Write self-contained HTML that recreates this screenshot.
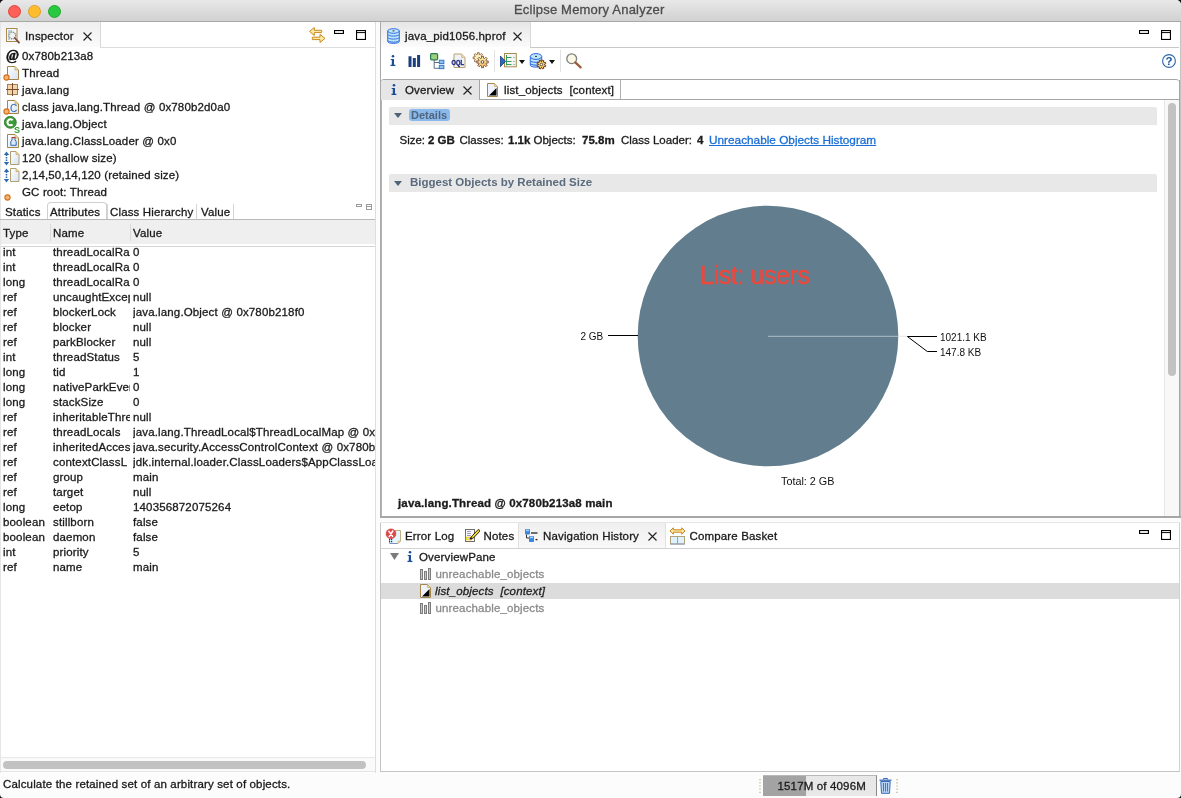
<!DOCTYPE html>
<html><head><meta charset="utf-8">
<style>
html,body{margin:0;padding:0;}
body{width:1181px;height:798px;overflow:hidden;position:relative;background:#0d0d12;font-family:"Liberation Sans",sans-serif;font-size:12px;color:#1a1a1a;}
#win{will-change:transform;position:absolute;left:0;top:0;width:1181px;height:798px;background:#fcfcfc;border-radius:5px 5px 4px 4px;overflow:hidden;}
.a{position:absolute;}
.t{position:absolute;white-space:pre;line-height:15px;font-size:11.5px;letter-spacing:0.15px;-webkit-text-stroke:0.3px currentColor;margin-top:-1px;}
#title{left:0;top:0;width:1181px;height:21px;background:linear-gradient(#e8e8e8,#d1d1d1);border-bottom:1px solid #a8a8a8;}
.tl{position:absolute;top:5px;width:11px;height:11px;border-radius:50%;}
.pane{position:absolute;background:#fff;}
.hl{position:absolute;height:1px;}
.vl{position:absolute;width:1px;}
</style></head><body>
<div id="win">
<!-- title bar -->
<div id="title" class="a">
  <div class="tl" style="left:8px;background:#fe5f57;border:0.5px solid #e1453f;"></div>
  <div class="tl" style="left:28px;background:#febc2e;border:0.5px solid #dfa023;"></div>
  <div class="tl" style="left:48px;background:#28c840;border:0.5px solid #1daa2c;"></div>
  <div class="t" style="left:514px;top:3px;font-size:13px;color:#4d4d4d;letter-spacing:0.2px;">Eclipse Memory Analyzer</div>
</div>

<!-- LEFT PANE -->
<div class="pane" style="left:0;top:22px;width:375px;height:751px;"></div>
<div class="vl" style="left:375px;top:22px;height:751px;background:#dedede;"></div>
<div class="vl" style="left:0px;top:22px;height:751px;background:#e6e6e6;"></div>
<!-- inspector tab -->
<div class="a" style="left:1px;top:22px;width:99px;height:25px;background:linear-gradient(#efefef,#fbfbfb);"></div>
<div class="vl" style="left:100px;top:22px;height:26px;background:#d8d8d8;"></div>
<div class="hl" style="left:100px;top:47px;width:275px;background:#dcdcdc;"></div>
<div class="t" style="left:25px;top:30px;">Inspector</div>
<svg width="0" height="0" style="position:absolute">
<defs>
<linearGradient id="docg" x1="0" y1="0" x2="1" y2="1"><stop offset="0" stop-color="#ffffff"/><stop offset="1" stop-color="#d6e2f2"/></linearGradient>
<symbol id="doc" viewBox="0 0 12 14"><path d="M0.5 0.5H8L11.5 4V13.5H0.5Z" fill="url(#docg)" stroke="#a5854a" stroke-width="1"/><path d="M8 0.5V4H11.5" fill="#e8d39a" stroke="#c9ad6c" stroke-width="0.8"/></symbol>
<symbol id="info" viewBox="0 0 6 11"><circle cx="3" cy="1.3" r="1.3" fill="#1b4d9b"/><path d="M0.7 4H4V9.8H5.4V11H0.5V9.8H1.8V5.1H0.7Z" fill="#1b4d9b"/></symbol>
<symbol id="odot" viewBox="0 0 7 7"><circle cx="3.5" cy="3.5" r="2.6" fill="#f6b46b" stroke="#d46f1e" stroke-width="1.1"/></symbol>
</defs></svg>
<!-- left tab icons -->
<svg class="a" style="left:6px;top:28px" width="15" height="16" viewBox="0 0 15 16"><rect x="0.5" y="0.5" width="10.5" height="13" fill="#f4f7fc" stroke="#a88a4c"/><path d="M2 3h4M2 5h2M2 7h1.5M2 9h1.5M2 11h2" stroke="#6b8bbd" stroke-width="0.8"/><circle cx="6.3" cy="7.5" r="3.4" fill="#eef1f4" stroke="#8a8a6a" stroke-width="1.2" stroke-dasharray="1.2 0.6"/><path d="M8.8 10l4.2 4.6" stroke="#7a4a36" stroke-width="1.8" stroke-linecap="round"/></svg>
<svg class="a" style="left:83px;top:32px" width="9" height="9" viewBox="0 0 9 9"><path d="M0.5 0.5L8.5 8.5M8.5 0.5L0.5 8.5" stroke="#222" stroke-width="1.1"/></svg>
<svg class="a" style="left:309px;top:27px" width="17" height="16" viewBox="0 0 17 16"><path d="M0.5 4.4L5.3 0.5V3.3H12.7V5.6H5.3V8.5Z" fill="#fbe9a8" stroke="#c98a1e" stroke-width="1" stroke-linejoin="round"/><path d="M16 11.4L11 7.3V10.2H3.3V12.6H11V15.5Z" fill="#fbe9a8" stroke="#c98a1e" stroke-width="1" stroke-linejoin="round"/></svg>
<svg class="a" style="left:334px;top:30px" width="10" height="4"><rect x="0.55" y="0.55" width="8.9" height="2.9" fill="#fff" stroke="#000" stroke-width="1.1"/></svg>
<svg class="a" style="left:356px;top:30px" width="10" height="10"><rect x="0.55" y="0.55" width="8.9" height="8.9" fill="#fff" stroke="#000" stroke-width="1.1"/><path d="M0 2.6H10" stroke="#000" stroke-width="1"/></svg>

<!-- inspector items -->
<div class="a" style="left:6px;top:46.5px;font-family:'Liberation Serif';font-weight:bold;font-size:14px;line-height:17px;-webkit-text-stroke:0.5px #000;">@</div>
<div class="t" style="left:22px;top:49.5px;">0x780b213a8</div>
<svg class="a" style="left:7px;top:66px" width="12" height="14"><use href="#doc"/></svg>
<svg class="a" style="left:3px;top:74px" width="7" height="7"><use href="#odot"/></svg>
<div class="t" style="left:22px;top:66.5px;">Thread</div>
<svg class="a" style="left:6px;top:83px" width="13" height="13" viewBox="0 0 13 13"><rect x="1.5" y="1.5" width="10" height="10" fill="#f3d7a8" stroke="#b07a50" stroke-width="1"/><path d="M6.5 0V13M0 6.5H13" stroke="#7a4a30" stroke-width="1"/></svg>
<div class="t" style="left:22px;top:83.5px;">java.lang</div>
<svg class="a" style="left:7px;top:100px" width="12" height="14"><use href="#doc"/></svg>
<div class="a" style="left:10px;top:103px;font-size:10px;line-height:11px;color:#2a62b0;">C</div>
<svg class="a" style="left:3px;top:108px" width="7" height="7"><use href="#odot"/></svg>
<div class="t" style="left:22px;top:100.5px;">class java.lang.Thread @ 0x780b2d0a0</div>
<svg class="a" style="left:4px;top:116px" width="16" height="17" viewBox="0 0 16 17"><circle cx="6.3" cy="6.3" r="6" fill="#3e9a3a" stroke="#2b7a2b" stroke-width="0.8"/><path d="M8.6 4.2A3 3 0 1 0 8.6 8.4" fill="none" stroke="#fff" stroke-width="2"/><text x="10" y="16.6" font-family="Liberation Sans" font-weight="bold" font-size="9" fill="#2f9a2f">S</text></svg>
<div class="t" style="left:22px;top:117.5px;">java.lang.Object</div>
<svg class="a" style="left:7px;top:134px" width="12" height="14"><use href="#doc"/></svg>
<svg class="a" style="left:10px;top:137px" width="7" height="9" viewBox="0 0 7 9"><rect x="1.5" y="0" width="4" height="1.6" fill="#a33a2a"/><path d="M2 1.6V3L0.8 4.6V8.3H6.2V4.6L5 3V1.6" fill="#dbe9f8" stroke="#2f69b5" stroke-width="1"/></svg>
<div class="t" style="left:22px;top:134.5px;">java.lang.ClassLoader @ 0x0</div>
<svg class="a" style="left:3px;top:151px" width="17" height="15" viewBox="0 0 17 15"><path d="M3.5 3.5V12" stroke="#2c6bb5" stroke-width="1.6" stroke-dasharray="1.5 1"/><path d="M0.8 4L3.5 0.6L6.2 4ZM0.8 11L3.5 14.4L6.2 11Z" fill="#2c6bb5"/><path d="M7.5 0.5H13L16 3.5V13.5H7.5Z" fill="url(#docg)" stroke="#b0a070" stroke-width="1"/><path d="M13 0.5V3.5H16" fill="#e8d39a" stroke="#c9ad6c" stroke-width="0.8"/></svg>
<div class="t" style="left:22px;top:151.5px;">120 (shallow size)</div>
<svg class="a" style="left:3px;top:168px" width="17" height="15" viewBox="0 0 17 15"><path d="M3.5 3.5V12" stroke="#2c6bb5" stroke-width="1.6" stroke-dasharray="1.5 1"/><path d="M0.8 4L3.5 0.6L6.2 4ZM0.8 11L3.5 14.4L6.2 11Z" fill="#2c6bb5"/><path d="M7.5 0.5H13L16 3.5V13.5H7.5Z" fill="url(#docg)" stroke="#b0a070" stroke-width="1"/><path d="M13 0.5V3.5H16" fill="#e8d39a" stroke="#c9ad6c" stroke-width="0.8"/></svg>
<div class="t" style="left:22px;top:168.5px;">2,14,50,14,120 (retained size)</div>
<svg class="a" style="left:3.5px;top:193.5px" width="7" height="7"><use href="#odot"/></svg>
<div class="t" style="left:22px;top:185.5px;">GC root: Thread</div>

<!-- attribute tabs -->
<div class="a" style="left:47px;top:202px;width:58px;height:18px;border:1px solid #cfcfcf;border-bottom:none;border-radius:4px 4px 0 0;background:#fff;"></div>
<div class="hl" style="left:0;top:219px;width:375px;background:#b9b9b9;"></div>
<div class="vl" style="left:107px;top:204px;height:15px;background:#d4d4d4;"></div>
<div class="vl" style="left:196px;top:204px;height:15px;background:#d4d4d4;"></div>
<div class="vl" style="left:233px;top:204px;height:15px;background:#d4d4d4;"></div>
<div class="t" style="left:5px;top:205.5px;">Statics</div>
<div class="t" style="left:50px;top:205.5px;">Attributes</div>
<div class="t" style="left:110px;top:205.5px;">Class Hierarchy</div>
<div class="t" style="left:201px;top:205.5px;">Value</div>
<div class="a" style="left:356px;top:204px;width:4px;height:1px;border:1px solid #9a9a9a;"></div>
<div class="a" style="left:366px;top:204px;width:4px;height:4px;border:1px solid #9a9a9a;"></div>
<div class="hl" style="left:366px;top:206px;width:6px;background:#9a9a9a;"></div>

<!-- table header -->
<div class="a" style="left:1px;top:220px;width:374px;height:24px;background:#efefef;"></div>
<div class="hl" style="left:1px;top:245.5px;width:374px;background:#d6d6d6;"></div>
<div class="vl" style="left:50px;top:224px;height:17px;background:#d9d9d9;"></div>
<div class="vl" style="left:130px;top:224px;height:17px;background:#d9d9d9;"></div>
<div class="t" style="left:3px;top:226.5px;">Type</div>
<div class="t" style="left:53px;top:226.5px;">Name</div>
<div class="t" style="left:133px;top:226.5px;">Value</div>
<div id="rows" class="a" style="left:0;top:245px;width:375px;height:510px;overflow:hidden;"></div>
<div class="t" style="left:3px;top:245.5px;">int</div><div class="t" style="left:53px;top:245.5px;width:77px;overflow:hidden;">threadLocalRa</div><div class="t" style="left:133px;top:245.5px;width:242px;overflow:hidden;">0</div>
<div class="t" style="left:3px;top:260.5px;">int</div><div class="t" style="left:53px;top:260.5px;width:77px;overflow:hidden;">threadLocalRa</div><div class="t" style="left:133px;top:260.5px;width:242px;overflow:hidden;">0</div>
<div class="t" style="left:3px;top:275.5px;">long</div><div class="t" style="left:53px;top:275.5px;width:77px;overflow:hidden;">threadLocalRa</div><div class="t" style="left:133px;top:275.5px;width:242px;overflow:hidden;">0</div>
<div class="t" style="left:3px;top:290.5px;">ref</div><div class="t" style="left:53px;top:290.5px;width:77px;overflow:hidden;">uncaughtExcep</div><div class="t" style="left:133px;top:290.5px;width:242px;overflow:hidden;">null</div>
<div class="t" style="left:3px;top:305.5px;">ref</div><div class="t" style="left:53px;top:305.5px;width:77px;overflow:hidden;">blockerLock</div><div class="t" style="left:133px;top:305.5px;width:242px;overflow:hidden;">java.lang.Object @ 0x780b218f0</div>
<div class="t" style="left:3px;top:320.5px;">ref</div><div class="t" style="left:53px;top:320.5px;width:77px;overflow:hidden;">blocker</div><div class="t" style="left:133px;top:320.5px;width:242px;overflow:hidden;">null</div>
<div class="t" style="left:3px;top:335.5px;">ref</div><div class="t" style="left:53px;top:335.5px;width:77px;overflow:hidden;">parkBlocker</div><div class="t" style="left:133px;top:335.5px;width:242px;overflow:hidden;">null</div>
<div class="t" style="left:3px;top:350.5px;">int</div><div class="t" style="left:53px;top:350.5px;width:77px;overflow:hidden;">threadStatus</div><div class="t" style="left:133px;top:350.5px;width:242px;overflow:hidden;">5</div>
<div class="t" style="left:3px;top:365.5px;">long</div><div class="t" style="left:53px;top:365.5px;width:77px;overflow:hidden;">tid</div><div class="t" style="left:133px;top:365.5px;width:242px;overflow:hidden;">1</div>
<div class="t" style="left:3px;top:380.5px;">long</div><div class="t" style="left:53px;top:380.5px;width:77px;overflow:hidden;">nativeParkEver</div><div class="t" style="left:133px;top:380.5px;width:242px;overflow:hidden;">0</div>
<div class="t" style="left:3px;top:395.5px;">long</div><div class="t" style="left:53px;top:395.5px;width:77px;overflow:hidden;">stackSize</div><div class="t" style="left:133px;top:395.5px;width:242px;overflow:hidden;">0</div>
<div class="t" style="left:3px;top:410.5px;">ref</div><div class="t" style="left:53px;top:410.5px;width:77px;overflow:hidden;">inheritableThre</div><div class="t" style="left:133px;top:410.5px;width:242px;overflow:hidden;">null</div>
<div class="t" style="left:3px;top:425.5px;">ref</div><div class="t" style="left:53px;top:425.5px;width:77px;overflow:hidden;">threadLocals</div><div class="t" style="left:133px;top:425.5px;width:242px;overflow:hidden;">java.lang.ThreadLocal$ThreadLocalMap @ 0x7</div>
<div class="t" style="left:3px;top:440.5px;">ref</div><div class="t" style="left:53px;top:440.5px;width:77px;overflow:hidden;">inheritedAcces</div><div class="t" style="left:133px;top:440.5px;width:242px;overflow:hidden;">java.security.AccessControlContext @ 0x780b</div>
<div class="t" style="left:3px;top:455.5px;">ref</div><div class="t" style="left:53px;top:455.5px;width:77px;overflow:hidden;">contextClassL</div><div class="t" style="left:133px;top:455.5px;width:242px;overflow:hidden;">jdk.internal.loader.ClassLoaders$AppClassLoa</div>
<div class="t" style="left:3px;top:470.5px;">ref</div><div class="t" style="left:53px;top:470.5px;width:77px;overflow:hidden;">group</div><div class="t" style="left:133px;top:470.5px;width:242px;overflow:hidden;">main</div>
<div class="t" style="left:3px;top:485.5px;">ref</div><div class="t" style="left:53px;top:485.5px;width:77px;overflow:hidden;">target</div><div class="t" style="left:133px;top:485.5px;width:242px;overflow:hidden;">null</div>
<div class="t" style="left:3px;top:500.5px;">long</div><div class="t" style="left:53px;top:500.5px;width:77px;overflow:hidden;">eetop</div><div class="t" style="left:133px;top:500.5px;width:242px;overflow:hidden;">140356872075264</div>
<div class="t" style="left:3px;top:515.5px;">boolean</div><div class="t" style="left:53px;top:515.5px;width:77px;overflow:hidden;">stillborn</div><div class="t" style="left:133px;top:515.5px;width:242px;overflow:hidden;">false</div>
<div class="t" style="left:3px;top:530.5px;">boolean</div><div class="t" style="left:53px;top:530.5px;width:77px;overflow:hidden;">daemon</div><div class="t" style="left:133px;top:530.5px;width:242px;overflow:hidden;">false</div>
<div class="t" style="left:3px;top:545.5px;">int</div><div class="t" style="left:53px;top:545.5px;width:77px;overflow:hidden;">priority</div><div class="t" style="left:133px;top:545.5px;width:242px;overflow:hidden;">5</div>
<div class="t" style="left:3px;top:560.5px;">ref</div><div class="t" style="left:53px;top:560.5px;width:77px;overflow:hidden;">name</div><div class="t" style="left:133px;top:560.5px;width:242px;overflow:hidden;">main</div>

<!-- h scrollbar -->
<div class="a" style="left:1px;top:757px;width:374px;height:15px;background:#fafafa;border-top:1px solid #e8e8e8;border-bottom:1px solid #e4e4e4;box-sizing:border-box;"></div>
<div class="a" style="left:3px;top:761px;width:363px;height:8px;border-radius:4px;background:#c2c2c2;"></div>


<!-- RIGHT TOP PANE -->
<div class="pane" style="left:381px;top:22px;width:798px;height:494px;"></div>
<div class="vl" style="left:380px;top:22px;height:495px;background:#a9a9a9;"></div>
<div class="vl" style="left:1180px;top:22px;height:496px;background:#c4c4c4;"></div><div class="vl" style="left:1179px;top:80px;height:437px;background:#a6a6a6;"></div><div class="vl" style="left:381px;top:80px;height:437px;background:#b4b4b4;"></div>
<div class="a" style="left:380px;top:516px;width:801px;height:2px;background:#a6a6a6;"></div>
<div class="a" style="left:381px;top:22px;width:149px;height:25px;background:linear-gradient(#e6e6e6,#fbfbfb);"></div>
<div class="vl" style="left:530px;top:22px;height:26px;background:#d8d8d8;"></div>
<div class="hl" style="left:530px;top:47px;width:649px;background:#c8c8c8;"></div>
<div class="t" style="left:405px;top:30px;">java_pid1056.hprof</div>
<!-- hprof tab details -->
<svg class="a" style="left:387px;top:28px" width="13" height="16" viewBox="0 0 13 16"><g fill="#bfe6f6" stroke="#2a66e0" stroke-width="0.95"><path d="M0.7 12.2v1.3c0 1.1 2.6 1.9 5.8 1.9s5.8-0.8 5.8-1.9v-1.3"/><path d="M0.7 9.2v3c0 1.1 2.6 1.9 5.8 1.9s5.8-0.8 5.8-1.9v-3"/><path d="M0.7 6.2v3c0 1.1 2.6 1.9 5.8 1.9s5.8-0.8 5.8-1.9v-3"/><path d="M0.7 3v3.2c0 1.1 2.6 1.9 5.8 1.9s5.8-0.8 5.8-1.9V3"/><ellipse cx="6.5" cy="3" rx="5.8" ry="2.3"/></g><path d="M5.6 2.9h1.8" stroke="#234" stroke-width="1"/></svg>
<svg class="a" style="left:513px;top:32px" width="9" height="9" viewBox="0 0 9 9"><path d="M0.5 0.5L8.5 8.5M8.5 0.5L0.5 8.5" stroke="#222" stroke-width="1.1"/></svg>
<svg class="a" style="left:1139px;top:30px" width="10" height="4"><rect x="0.55" y="0.55" width="8.9" height="2.9" fill="#fff" stroke="#000" stroke-width="1.1"/></svg>
<svg class="a" style="left:1161px;top:30px" width="10" height="10"><rect x="0.55" y="0.55" width="8.9" height="8.9" fill="#fff" stroke="#000" stroke-width="1.1"/><path d="M0 2.6H10" stroke="#000" stroke-width="1"/></svg>

<!-- toolbar -->
<svg class="a" style="left:389.5px;top:55px" width="6" height="11"><use href="#info"/></svg>
<svg class="a" style="left:408px;top:55px" width="13" height="12" viewBox="0 0 13 12"><path d="M0.5 1.2h3v10.8h-3zM4.8 3h3v9h-3zM9.1 0h3v12h-3z" fill="#1b3f7c"/></svg>
<svg class="a" style="left:430px;top:53px" width="15" height="17" viewBox="0 0 15 17"><rect x="0.6" y="0.6" width="7" height="6.2" rx="1" fill="#9ad07c" stroke="#2c7b4c" stroke-width="1.2"/><path d="M4.2 7v8.3H9M4.2 9.5H9" fill="none" stroke="#5e6e86" stroke-width="1"/><rect x="9.3" y="7.2" width="4.6" height="3.4" fill="#8cc4ee" stroke="#2f6fc8" stroke-width="0.9"/><rect x="9.3" y="12.3" width="4.6" height="3.4" fill="#8cc4ee" stroke="#2f6fc8" stroke-width="0.9"/></svg>
<svg class="a" style="left:451px;top:53px" width="16" height="16" viewBox="0 0 16 16"><path d="M3 1h7.5L14 4.5V14.5H3Z" fill="#eef3fb" stroke="#b9a16c" stroke-width="1"/><path d="M10.5 1V4.5H14" fill="#e8d8a8" stroke="#c8b07a" stroke-width="0.7"/><text x="0.6" y="11.6" font-family="Liberation Sans" font-weight="bold" font-size="7.5" fill="#1c2478" stroke="#1c2478" stroke-width="0.35" textLength="12.4" lengthAdjust="spacingAndGlyphs">OQL</text></svg>
<svg class="a" style="left:472px;top:52px" width="18" height="18" viewBox="0 0 18 18"><defs><linearGradient id="gg" x1="0" y1="0" x2="0" y2="1"><stop offset="0" stop-color="#fdf6b0"/><stop offset="1" stop-color="#f2b860"/></linearGradient></defs><path d="M9.80 4.96L11.42 4.89L11.42 6.71L9.80 6.64L9.37 7.68L10.57 8.77L9.27 10.07L8.18 8.87L7.14 9.30L7.21 10.92L5.39 10.92L5.46 9.30L4.42 8.87L3.33 10.07L2.03 8.77L3.23 7.68L2.80 6.64L1.18 6.71L1.18 4.89L2.80 4.96L3.23 3.92L2.03 2.83L3.33 1.53L4.42 2.73L5.46 2.30L5.39 0.68L7.21 0.68L7.14 2.30L8.18 2.73L9.27 1.53L10.57 2.83L9.37 3.92Z" fill="#fcf2b8" stroke="#9a6a52" stroke-width="1"/><path d="M14.39 9.06L16.21 8.98L16.21 11.02L14.39 10.94L13.91 12.09L15.26 13.32L13.82 14.76L12.59 13.41L11.44 13.89L11.52 15.71L9.48 15.71L9.56 13.89L8.41 13.41L7.18 14.76L5.74 13.32L7.09 12.09L6.61 10.94L4.79 11.02L4.79 8.98L6.61 9.06L7.09 7.91L5.74 6.68L7.18 5.24L8.41 6.59L9.56 6.11L9.48 4.29L11.52 4.29L11.44 6.11L12.59 6.59L13.82 5.24L15.26 6.68L13.91 7.91Z" fill="url(#gg)" stroke="#8a5a48" stroke-width="1"/><circle cx="10.5" cy="10" r="1.4" fill="#fff" stroke="#5a4a40" stroke-width="1"/></svg>
<div class="vl" style="left:494px;top:50px;height:22px;background:#e2e2e2;"></div>
<svg class="a" style="left:500px;top:53px" width="17" height="15" viewBox="0 0 17 15"><rect x="4.5" y="0.5" width="11.8" height="13.3" fill="#f3f6f4" stroke="#a98b4e" stroke-width="1"/><path d="M6.5 2V12.5M6.5 4.5h5M6.5 8.5h5M6.5 11.5h5" stroke="#3a9a5a" stroke-width="1"/><path d="M13.5 4h1v1h-1zM13.5 8h1v1h-1zM13.5 11h1v1h-1z" fill="#3a9a5a"/><path d="M0.3 3V13.7L5.6 8.3Z" fill="#2a6ab8" stroke="#14307a" stroke-width="0.8"/></svg>
<svg class="a" style="left:519px;top:60px" width="6" height="4" viewBox="0 0 6 4"><path d="M0 0h6L3 4z" fill="#111"/></svg>
<svg class="a" style="left:529px;top:52px" width="18" height="18" viewBox="0 0 18 18"><g fill="#bfe6f6" stroke="#2a66e0" stroke-width="1"><path d="M1.3 11.3v2c0 1 2.5 1.8 5.7 1.8s5.7-0.8 5.7-1.8v-2"/><path d="M1.3 8.5v2.8c0 1 2.5 1.8 5.7 1.8s5.7-0.8 5.7-1.8V8.5"/><path d="M1.3 4.5v4c0 1 2.5 1.8 5.7 1.8s5.7-0.8 5.7-1.8v-4"/><ellipse cx="7" cy="4.5" rx="5.7" ry="2.9"/></g><path d="M6 4.4h2" stroke="#234" stroke-width="1"/><path d="M15.47 12.92L16.80 13.46L16.19 14.93L14.87 14.37L14.27 14.97L14.83 16.29L13.36 16.90L12.82 15.57L11.98 15.57L11.44 16.90L9.97 16.29L10.53 14.97L9.93 14.37L8.61 14.93L8.00 13.46L9.33 12.92L9.33 12.08L8.00 11.54L8.61 10.07L9.93 10.63L10.53 10.03L9.97 8.71L11.44 8.10L11.98 9.43L12.82 9.43L13.36 8.10L14.83 8.71L14.27 10.03L14.87 10.63L16.19 10.07L16.80 11.54L15.47 12.08Z" fill="#fbd86a" stroke="#6a3a2a" stroke-width="1"/><circle cx="12.4" cy="12.5" r="1.3" fill="#fff" stroke="#4a3a3a" stroke-width="0.9"/></svg>
<svg class="a" style="left:549px;top:60px" width="6" height="4" viewBox="0 0 6 4"><path d="M0 0h6L3 4z" fill="#111"/></svg>
<div class="vl" style="left:560px;top:50px;height:22px;background:#e2e2e2;"></div>
<svg class="a" style="left:566px;top:53px" width="16" height="16" viewBox="0 0 16 16"><circle cx="5.7" cy="5.7" r="4.9" fill="#fbf8e6" stroke="#7f7f7f" stroke-width="1.3"/><path d="M9.3 9.4L14.6 14.4" stroke="#9a5a3a" stroke-width="2.2" stroke-linecap="round"/></svg>
<svg class="a" style="left:1162px;top:54px" width="15" height="15" viewBox="0 0 15 15"><circle cx="7" cy="7" r="6.4" fill="#fafcff" stroke="#2f67a9" stroke-width="1.1"/><text x="7" y="10.8" text-anchor="middle" font-family="Liberation Sans" font-weight="bold" font-size="11.5" fill="#1f5699">?</text></svg>

<!-- sub tab folder -->
<div class="a" style="left:381px;top:79px;width:798px;height:21px;border-top:1px solid #a6a6a6;border-bottom:1px solid #a6a6a6;border-radius:3px 3px 0 0;box-sizing:border-box;background:#fff;"></div>
<div class="a" style="left:381px;top:80px;width:98px;height:20px;background:#e6e6e6;border-radius:3px 0 0 0;"></div>
<div class="vl" style="left:479px;top:80px;height:20px;background:#a6a6a6;"></div>
<div class="vl" style="left:620px;top:80px;height:19px;background:#b0b0b0;"></div>
<svg class="a" style="left:390.5px;top:84px" width="6" height="11"><use href="#info"/></svg>
<div class="t" style="left:405px;top:83.5px;">Overview</div>
<svg class="a" style="left:463px;top:86px" width="9" height="9" viewBox="0 0 9 9"><path d="M0.5 0.5L8.5 8.5M8.5 0.5L0.5 8.5" stroke="#222" stroke-width="1.1"/></svg>
<svg class="a" style="left:487px;top:83px" width="11" height="14" viewBox="0 0 11 14"><path d="M0.5 0.5H7.5L10.5 3.5V13.5H0.5Z" fill="#eef2fa" stroke="#a6874a" stroke-width="1"/><path d="M7.5 0.5V3.5H10.5" fill="#ead9a0" stroke="#c8ac6a" stroke-width="0.8"/><path d="M2 12.5L9.5 5V12.5Z" fill="#000"/></svg>
<div class="t" style="left:504px;top:83.5px;">list_objects  [context]</div>

<!-- content -->
<div class="a" style="left:389px;top:107px;width:768px;height:18px;background:#e8e8e8;border-radius:2px 2px 0 0;"></div>
<svg class="a" style="left:394px;top:113px" width="8" height="5" viewBox="0 0 8 5"><path d="M0 0h8L4 5z" fill="#4f6374"/></svg>
<div class="a" style="left:409px;top:109px;width:41px;height:12px;background:#8ab9ee;border-radius:3px;"></div>
<div class="a" style="left:411px;top:107.5px;font-size:11px;line-height:15px;font-weight:bold;color:#51657a;white-space:pre;">Details</div>
<div class="t" style="left:399.5px;top:134px;font-size:11.5px;letter-spacing:0;">Size:</div>
<div class="t" style="left:428px;top:134px;font-size:11.5px;letter-spacing:0;font-weight:bold;">2 GB</div>
<div class="t" style="left:459.5px;top:134px;font-size:11.5px;letter-spacing:0;">Classes:</div>
<div class="t" style="left:508px;top:134px;font-size:11.5px;letter-spacing:0;font-weight:bold;">1.1k</div>
<div class="t" style="left:533.5px;top:134px;font-size:11.5px;letter-spacing:0;">Objects:</div>
<div class="t" style="left:582px;top:134px;font-size:11.5px;letter-spacing:0;font-weight:bold;">75.8m</div>
<div class="t" style="left:621px;top:134px;font-size:11.5px;letter-spacing:0;">Class Loader:</div>
<div class="t" style="left:697px;top:134px;font-size:11.5px;letter-spacing:0;font-weight:bold;">4</div>
<div class="t" style="left:709px;top:134px;font-size:11.8px;letter-spacing:0;color:#1b6fd6;text-decoration:underline;">Unreachable Objects Histogram</div>

<div class="a" style="left:389px;top:174px;width:768px;height:18px;background:#e8e8e8;border-radius:2px 2px 0 0;"></div>
<svg class="a" style="left:394px;top:181px" width="8" height="5" viewBox="0 0 8 5"><path d="M0 0h8L4 5z" fill="#4f6374"/></svg>
<div class="a" style="left:410px;top:174.5px;font-size:11.5px;line-height:15px;font-weight:bold;color:#5a6b7d;white-space:pre;">Biggest Objects by Retained Size</div>

<svg class="a" style="left:560px;top:195px" width="450" height="300" viewBox="560 195 450 300">
<circle cx="768" cy="336" r="130.3" fill="#627d8d"/>
<path d="M768 336.3H898" stroke="#c7d1d8" stroke-width="0.8"/>
<path d="M608 335.5H638" stroke="#000" stroke-width="1"/>
<path d="M898 336.3H907" stroke="#e0e0e0" stroke-width="0.8"/>
<path d="M937 336.5H907.4L927.3 351.5H937" fill="none" stroke="#000" stroke-width="1"/>
</svg>
<div class="a" style="left:580.5px;top:329.5px;font-size:10px;line-height:13px;white-space:pre;color:#111;">2 GB</div>
<div class="a" style="left:940px;top:330.5px;font-size:10px;line-height:13px;white-space:pre;color:#111;">1021.1 KB</div>
<div class="a" style="left:940px;top:345.5px;font-size:10px;line-height:13px;white-space:pre;color:#111;">147.8 KB</div>
<div class="a" style="left:781px;top:474.5px;font-size:10.8px;line-height:13px;white-space:pre;color:#111;">Total: 2 GB</div>
<div class="a" style="left:700px;top:260.5px;font-size:25px;line-height:29px;white-space:pre;color:#ef473b;letter-spacing:-0.4px;-webkit-text-stroke:0.4px #ef473b;">List: users</div>
<div class="t" style="left:398px;top:496.5px;font-weight:bold;">java.lang.Thread @ 0x780b213a8 main</div>

<!-- v scrollbar -->
<div class="a" style="left:1164px;top:100px;width:15px;height:416px;background:#f8f8f8;border-left:1px solid #e6e6e6;box-sizing:border-box;"></div>
<div class="a" style="left:1168px;top:103px;width:8px;height:273px;border-radius:4px;background:#c2c2c2;"></div>


<!-- RIGHT BOTTOM PANE -->
<div class="pane" style="left:381px;top:523px;width:798px;height:248px;"></div>
<div class="vl" style="left:380px;top:522px;height:250px;background:#c4c4c4;"></div>
<div class="vl" style="left:1179px;top:522px;height:250px;background:#d2d2d2;"></div>
<div class="hl" style="left:380px;top:522px;width:800px;background:#e6e6e6;"></div>
<div class="hl" style="left:380px;top:771px;width:800px;background:#c4c4c4;"></div>


<!-- bottom pane tabs -->
<div class="a" style="left:518px;top:523px;width:147px;height:25px;background:linear-gradient(#efefef,#f9f9f9);"></div>
<div class="vl" style="left:518px;top:523px;height:25px;background:#e0e0e0;"></div>
<div class="vl" style="left:665px;top:523px;height:25px;background:#e0e0e0;"></div>
<div class="hl" style="left:381px;top:548px;width:798px;background:#d2d2d2;"></div>
<svg class="a" style="left:385px;top:528px" width="17" height="17" viewBox="0 0 17 17"><path d="M4.5 2.5H15.5V13L13 15.5H4.5Z" fill="#e4f5fd" stroke="#bfb080" stroke-width="1"/><path d="M13 15.5V13H15.5Z" fill="#e8c8a0" stroke="#d8b890" stroke-width="0.6"/><path d="M5 15.5H12.5" stroke="#8090b8" stroke-width="1"/><path d="M4 11h1.2v1.2H4zM6 11h1.2v1.2H6zM4 13h1.2v1.2H4zM6 13h1.2v1.2H6z" fill="#1a3a7a"/><circle cx="6" cy="5.8" r="4.9" fill="#e04848" stroke="#c83838" stroke-width="0.6"/><path d="M4.2 8.6L7.8 3M3.9 3.4L7.6 8.4" stroke="#fff" stroke-width="1.5" stroke-linecap="round"/></svg>
<div class="t" style="left:405px;top:530px;">Error Log</div>
<svg class="a" style="left:465px;top:529px" width="15" height="13" viewBox="0 0 15 13"><rect x="0.5" y="0.5" width="9" height="12" fill="#fafaff" stroke="#6e6e6e" stroke-width="1"/><path d="M2 2.5h3.8M2 4.5h3.8M2 6.5h3.8" stroke="#8a8ab8" stroke-width="0.9"/><rect x="1.3" y="8.2" width="5.4" height="2.6" fill="#d8d8f0" stroke="#f2d21a" stroke-width="1"/><path d="M5 9.6L7.5 6.5L13.2 0.5L14.6 1.2L14.5 2.6L8.8 8.6L5.8 10.2Z" fill="#f4d830" stroke="#111" stroke-width="0.9" stroke-linejoin="round"/><path d="M4.5 10.2L6.2 8.2L7.2 9.4Z" fill="#000"/></svg>
<div class="t" style="left:483.5px;top:530px;">Notes</div>
<svg class="a" style="left:524px;top:528px" width="16" height="15" viewBox="0 0 16 15"><rect x="1" y="1" width="5" height="5.6" rx="0.8" fill="#3a86e0"/><rect x="2" y="1.6" width="3" height="1.6" fill="#a8d4f4"/><path d="M7 5h6.5" stroke="#222" stroke-width="1.3"/><path d="M2.5 6.6V10H5" stroke="#333" stroke-width="1" fill="none"/><rect x="5" y="8" width="5" height="6" rx="0.8" fill="#3a86e0"/><rect x="6" y="8.6" width="3" height="1.6" fill="#a8d4f4"/><path d="M11.5 11.6h2" stroke="#222" stroke-width="1.3"/></svg>
<div class="t" style="left:543px;top:530px;">Navigation History</div>
<svg class="a" style="left:648px;top:532px" width="9" height="9" viewBox="0 0 9 9"><path d="M0.5 0.5L8.5 8.5M8.5 0.5L0.5 8.5" stroke="#222" stroke-width="1.1"/></svg>
<svg class="a" style="left:669px;top:527px" width="17" height="18" viewBox="0 0 17 18"><path d="M1 4L4.3 0.8V2.8H12.7V0.8L16 4L12.7 7.2V5.2H4.3V7.2Z" fill="#fde9a8" stroke="#c98418" stroke-width="1" stroke-linejoin="round"/><rect x="1.5" y="9.5" width="14" height="7.5" fill="#dff2fc" stroke="#b0a27a" stroke-width="1"/><path d="M8.5 9.5V17" stroke="#b0a27a" stroke-width="1"/><path d="M1.5 17H15.5" stroke="#8a9ac0" stroke-width="1"/></svg>
<div class="t" style="left:689.5px;top:530px;">Compare Basket</div>
<svg class="a" style="left:1139px;top:530px" width="10" height="4"><rect x="0.55" y="0.55" width="8.9" height="2.9" fill="#fff" stroke="#000" stroke-width="1.1"/></svg>
<svg class="a" style="left:1161px;top:530px" width="10" height="10"><rect x="0.55" y="0.55" width="8.9" height="8.9" fill="#fff" stroke="#000" stroke-width="1.1"/><path d="M0 2.6H10" stroke="#000" stroke-width="1"/></svg>

<!-- tree -->
<div class="a" style="left:381px;top:583px;width:798px;height:16px;background:#dcdcdc;"></div>
<svg class="a" style="left:390px;top:553px" width="9" height="7" viewBox="0 0 9 7"><path d="M0 0h9L4.5 7z" fill="#7b7b7b"/></svg>
<svg class="a" style="left:406.5px;top:551px" width="6" height="11"><use href="#info"/></svg>
<div class="t" style="left:419px;top:550.5px;">OverviewPane</div>
<svg class="a" style="left:420px;top:568px" width="11" height="12" viewBox="0 0 11 12"><path d="M0 1h3v11h-3zM4 3h3v9h-3zM8 0h3v12h-3z" fill="#7c7c7c"/><path d="M1 2h1v9h-1zM5 4h1v7h-1zM9 1h1v10h-1z" fill="#c6c6c6"/></svg>
<div class="t" style="left:435.5px;top:567.5px;color:#8a8a8a;">unreachable_objects</div>
<svg class="a" style="left:420px;top:584px" width="11" height="14" viewBox="0 0 11 14"><path d="M0.5 0.5H7.5L10.5 3.5V13.5H0.5Z" fill="#eef2fa" stroke="#a6874a" stroke-width="1"/><path d="M7.5 0.5V3.5H10.5" fill="#ead9a0" stroke="#c8ac6a" stroke-width="0.8"/><path d="M2 12.5L9.5 5V12.5Z" fill="#000"/></svg>
<div class="t" style="left:435px;top:584.5px;font-style:italic;color:#222;">list_objects  [context]</div>
<svg class="a" style="left:420px;top:602px" width="11" height="12" viewBox="0 0 11 12"><path d="M0 1h3v11h-3zM4 3h3v9h-3zM8 0h3v12h-3z" fill="#7c7c7c"/><path d="M1 2h1v9h-1zM5 4h1v7h-1zM9 1h1v10h-1z" fill="#c6c6c6"/></svg>
<div class="t" style="left:435.5px;top:601.5px;color:#8a8a8a;">unreachable_objects</div>

<!-- memory indicator -->
<svg class="a" style="left:759px;top:778px" width="2" height="16" viewBox="0 0 2 16"><path d="M1 1V15" stroke="#b8a888" stroke-width="1.2" stroke-dasharray="1.2 2"/></svg>
<div class="a" style="left:763px;top:775px;width:114px;height:21px;background:#e8e8e8;border-top:1px solid #b8b8b8;border-right:1px solid #8a8a8a;box-sizing:border-box;"></div>
<div class="a" style="left:763px;top:776px;width:43px;height:20px;background:#a3a3a3;"></div>
<div class="t" style="left:777.5px;top:779.5px;">1517M of 4096M</div>
<svg class="a" style="left:879px;top:778px" width="13" height="16" viewBox="0 0 13 16"><path d="M0.5 2.2H12.5" stroke="#3a6ab8" stroke-width="1.3"/><path d="M4.5 1.5V0.5H8.5V1.5" stroke="#3a6ab8" stroke-width="1" fill="none"/><path d="M1.8 3.5H11.2L10.5 15.3H2.5Z" fill="#b8d4f4" stroke="#3a6ab8" stroke-width="1"/><path d="M4.5 5V13.5M6.5 5V13.5M8.5 5V13.5" stroke="#3a6ab8" stroke-width="0.9"/></svg>
<svg class="a" style="left:896px;top:778px" width="2" height="16" viewBox="0 0 2 16"><path d="M1 1V15" stroke="#b8a888" stroke-width="1.2" stroke-dasharray="1.2 2"/></svg>

<!-- status bar -->
<div class="t" style="left:3px;top:778px;">Calculate the retained set of an arbitrary set of objects.</div>
</div>
</body></html>
